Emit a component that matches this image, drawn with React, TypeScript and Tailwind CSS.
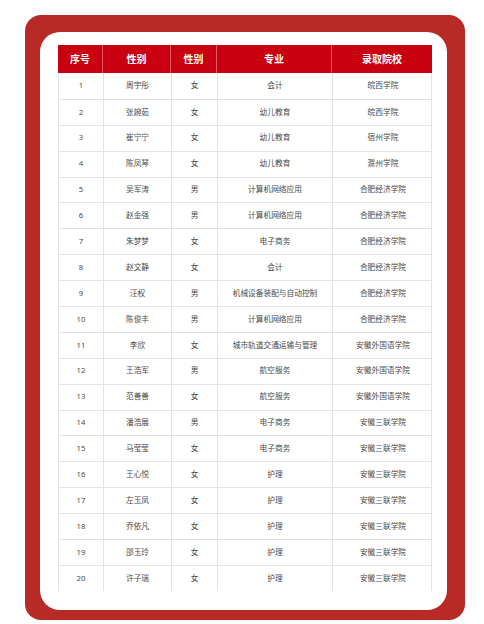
const rows: [string, string, string, string][] = [
  ['周宇彤', '女', '会计', '皖西学院'],
  ['张婉茹', '女', '幼儿教育', '皖西学院'],
  ['崔宁宁', '女', '幼儿教育', '宿州学院'],
  ['陈凤琴', '女', '幼儿教育', '滁州学院'],
  ['吴军涛', '男', '计算机网络应用', '合肥经济学院'],
  ['赵金强', '男', '计算机网络应用', '合肥经济学院'],
  ['朱梦梦', '女', '电子商务', '合肥经济学院'],
  ['赵文静', '女', '会计', '合肥经济学院'],
  ['汪权', '男', '机械设备装配与自动控制', '合肥经济学院'],
  ['陈俊丰', '男', '计算机网络应用', '合肥经济学院'],
  ['李欣', '女', '城市轨道交通运输与管理', '安徽外国语学院'],
  ['王浩军', '男', '航空服务', '安徽外国语学院'],
  ['范善善', '女', '航空服务', '安徽外国语学院'],
  ['潘浩展', '男', '电子商务', '安徽三联学院'],
  ['马莹莹', '女', '电子商务', '安徽三联学院'],
  ['王心悦', '女', '护理', '安徽三联学院'],
  ['左玉凤', '女', '护理', '安徽三联学院'],
  ['乔依凡', '女', '护理', '安徽三联学院'],
  ['邵玉玲', '女', '护理', '安徽三联学院'],
  ['许子瑞', '女', '护理', '安徽三联学院'],
]

const headers = ['序号', '性别', '性别', '专业', '录取院校']
const cols = 'grid grid-cols-[44px_68px_46px_115px_101px]'

export default function App() {
  return (
    <div
      className="h-[624px] w-[484px] bg-white pt-[15px]"
      style={{ fontFamily: '"Noto Sans", "Noto Sans CJK SC", sans-serif' }}
    >
      <div className="ml-[25px] h-[605px] w-[440px] rounded-[16px] bg-[#b72a25] pb-[10px] pl-[15px] pr-[18px] pt-[17px]">
        <div className="h-full rounded-[20px] bg-white pl-[18px] pt-[13px]">
          <div className="w-[374px]">
            <div className={`${cols} h-[28px] bg-[#c8000f] text-[10px] font-bold text-white`}>
              {headers.map((h, i) => (
                <div
                  key={i}
                  className={`flex items-center justify-center ${i > 0 ? 'border-l border-[#e05a5f]' : ''}`}
                >
                  {h}
                </div>
              ))}
            </div>
            {rows.map((r, idx) => (
              <div
                key={idx}
                className={`${cols} h-[25.9px] border-x border-[#e3e3e9] text-[7.7px] text-[#4a4a4a] ${idx > 0 ? 'border-t' : ''}`}
              >
                {[String(idx + 1), ...r].map((c, i) => (
                  <div
                    key={i}
                    className={`flex items-center justify-center ${i > 0 ? 'border-l border-[#e3e3e9]' : ''} ${i === 2 || i === 3 ? 'border-l-[1.5px]' : ''}`}
                  >
                    {c}
                  </div>
                ))}
              </div>
            ))}
          </div>
        </div>
      </div>
    </div>
  )
}
